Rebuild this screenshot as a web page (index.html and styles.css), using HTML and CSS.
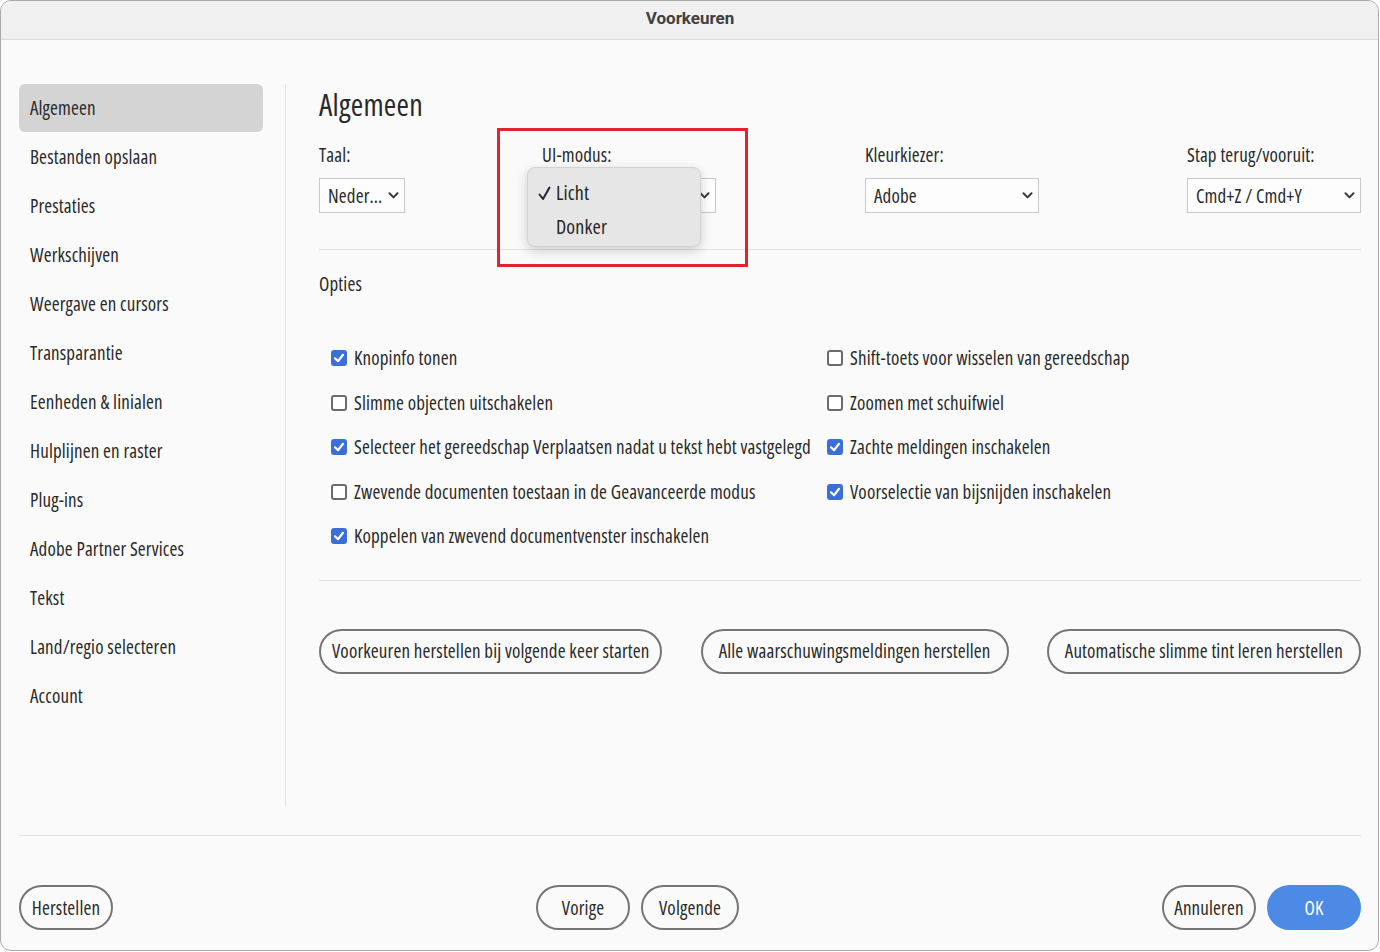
FILE: index.html
```html
<!DOCTYPE html>
<html lang="nl">
<head>
<meta charset="utf-8">
<title>Voorkeuren</title>
<link rel="stylesheet" href="styles.css">
</head>
<body>
<div class="window">
  <header class="titlebar">Voorkeuren</header>
  <div class="body">
    <div class="main">
      <nav class="sidebar">
        <div class="nav-item active">Algemeen</div>
        <div class="nav-item">Bestanden opslaan</div>
        <div class="nav-item">Prestaties</div>
        <div class="nav-item">Werkschijven</div>
        <div class="nav-item">Weergave en cursors</div>
        <div class="nav-item">Transparantie</div>
        <div class="nav-item">Eenheden &amp; linialen</div>
        <div class="nav-item">Hulplijnen en raster</div>
        <div class="nav-item">Plug-ins</div>
        <div class="nav-item">Adobe Partner Services</div>
        <div class="nav-item">Tekst</div>
        <div class="nav-item">Land/regio selecteren</div>
        <div class="nav-item">Account</div>
      </nav>
      <div class="vdivider"></div>
      <section class="content">
        <h1 class="heading">Algemeen</h1>
        <div class="fields">
          <div class="field">
            <div class="label">Taal:</div>
            <div class="select w-taal"><span>Neder…</span><svg class="chev" viewBox="0 0 10 7" width="11" height="7"><path d="M1 1.2 L5 5.4 L9 1.2"/></svg></div>
          </div>
          <div class="field ui-field">
            <div class="label">UI-modus:</div>
            <div class="select w-std"><span></span><svg class="chev" viewBox="0 0 10 7" width="11" height="7"><path d="M1 1.2 L5 5.4 L9 1.2"/></svg></div>
            <div class="highlight"></div>
            <div class="popup">
              <div class="popup-item"><span class="tick"><svg viewBox="0 0 13 15" width="13" height="15"><path d="M1.5 8.5 L5 13 L11.5 1.5"/></svg></span>Licht</div>
              <div class="popup-item"><span class="tick"></span>Donker</div>
            </div>
          </div>
          <div class="field">
            <div class="label">Kleurkiezer:</div>
            <div class="select w-std"><span>Adobe</span><svg class="chev" viewBox="0 0 10 7" width="11" height="7"><path d="M1 1.2 L5 5.4 L9 1.2"/></svg></div>
          </div>
          <div class="field">
            <div class="label">Stap terug/vooruit:</div>
            <div class="select w-std"><span>Cmd+Z / Cmd+Y</span><svg class="chev" viewBox="0 0 10 7" width="11" height="7"><path d="M1 1.2 L5 5.4 L9 1.2"/></svg></div>
          </div>
        </div>
        <hr class="sep sep-1">
        <div class="section-title">Opties</div>
        <div class="options">
          <label class="opt"><span class="cb on"><svg viewBox="0 0 16 16" width="16" height="16"><path d="M4 8.3 L7 11.2 L12 4.8"/></svg></span>Knopinfo tonen</label>
          <label class="opt"><span class="cb"></span>Shift-toets voor wisselen van gereedschap</label>
          <label class="opt"><span class="cb"></span>Slimme objecten uitschakelen</label>
          <label class="opt"><span class="cb"></span>Zoomen met schuifwiel</label>
          <label class="opt"><span class="cb on"><svg viewBox="0 0 16 16" width="16" height="16"><path d="M4 8.3 L7 11.2 L12 4.8"/></svg></span>Selecteer het gereedschap Verplaatsen nadat u tekst hebt vastgelegd</label>
          <label class="opt"><span class="cb on"><svg viewBox="0 0 16 16" width="16" height="16"><path d="M4 8.3 L7 11.2 L12 4.8"/></svg></span>Zachte meldingen inschakelen</label>
          <label class="opt"><span class="cb"></span>Zwevende documenten toestaan in de Geavanceerde modus</label>
          <label class="opt"><span class="cb on"><svg viewBox="0 0 16 16" width="16" height="16"><path d="M4 8.3 L7 11.2 L12 4.8"/></svg></span>Voorselectie van bijsnijden inschakelen</label>
          <label class="opt"><span class="cb on"><svg viewBox="0 0 16 16" width="16" height="16"><path d="M4 8.3 L7 11.2 L12 4.8"/></svg></span>Koppelen van zwevend documentvenster inschakelen</label>
        </div>
        <hr class="sep sep-2">
        <div class="reset-row">
          <button class="btn">Voorkeuren herstellen bij volgende keer starten</button>
          <button class="btn">Alle waarschuwingsmeldingen herstellen</button>
          <button class="btn">Automatische slimme tint leren herstellen</button>
        </div>
      </section>
    </div>
    <hr class="sep footer-sep">
    <footer class="footer">
      <div class="group"><button class="btn b-94">Herstellen</button></div>
      <div class="group"><button class="btn b-94">Vorige</button><button class="btn b-98">Volgende</button></div>
      <div class="group"><button class="btn b-94">Annuleren</button><button class="btn primary b-94">OK</button></div>
    </footer>
  </div>
</div>
</body>
</html>
```
FILE: styles.css
```css
* { box-sizing: border-box; }
html, body { margin: 0; padding: 0; background: #ffffff; }
body {
  width: 1380px;
  height: 952px;
  overflow: hidden;
  font-family: "Open Sans", "Liberation Sans", sans-serif;
  font-stretch: 75%;
  font-size: 19px;
  letter-spacing: 0.15px;
  color: #2a2a2a;
}
.window {
  width: 1379px;
  height: 951px;
  border: 1px solid #a9a9a9;
  border-radius: 11px;
  background: #fafafa;
  overflow: hidden;
  display: flex;
  flex-direction: column;
}
.titlebar {
  height: 39px;
  flex: none;
  background: #f0f0f0;
  border-bottom: 1px solid #dcdcdc;
  display: flex;
  align-items: center;
  justify-content: center;
  font-family: "Roboto", "Liberation Sans", sans-serif;
  font-stretch: normal;
  letter-spacing: 0;
  font-weight: 700;
  font-size: 17px;
  color: #404040;
  padding: 0 0 4px 1px;
}
.body {
  flex: 1;
  padding: 44px 17px 0 18px;
  display: flex;
  flex-direction: column;
}
.main {
  height: 722px;
  display: flex;
}
.sidebar {
  width: 244px;
  display: flex;
  flex-direction: column;
  gap: 1px;
}
.nav-item {
  height: 48px;
  line-height: 48px;
  padding-left: 11px;
  border-radius: 6px;
  white-space: nowrap;
}
.nav-item.active { background: #d4d4d4; }
.vdivider {
  width: 1px;
  background: #e2e2e2;
  margin-left: 22px;
}
.content {
  flex: 1;
  padding-left: 33px;
  min-width: 0;
}
.heading {
  margin: 0;
  height: 42px;
  line-height: 42px;
  font-size: 30px;
  letter-spacing: 0.25px;
  font-weight: 400;
  color: #2a2a2a;
}
.fields {
  margin-top: 17px;
  display: grid;
  grid-template-columns: 223px 323px 322px 1fr;
}
.field { position: relative; }
.label {
  height: 24px;
  line-height: 24px;
  margin-bottom: 11px;
  white-space: nowrap;
}
.select {
  height: 35px;
  border: 1.5px solid #c9c9c9;
  background: #fdfdfd;
  display: flex;
  align-items: center;
  justify-content: space-between;
  padding: 0 5px 0 8px;
  white-space: nowrap;
}
.w-taal { width: 86px; }
.w-std { width: 174px; }
.chev { flex: none; }
.chev path { fill: none; stroke: #3a3a3a; stroke-width: 2; stroke-linecap: round; stroke-linejoin: round; }
.highlight {
  position: absolute;
  left: -45px;
  top: -15px;
  width: 251px;
  height: 139px;
  border: 3.5px solid #e2222c;
  pointer-events: none;
}
.popup {
  position: absolute;
  left: -15px;
  top: 24px;
  width: 174px;
  height: 80px;
  background: #e6e6e6;
  border: 1px solid #d2d2d2;
  border-radius: 8px;
  box-shadow: 0 4px 12px rgba(0, 0, 0, 0.18);
  padding-top: 8px;
}
.popup-item {
  height: 34px;
  line-height: 34px;
  font-size: 20px;
  display: flex;
  align-items: center;
  color: #262626;
}
.tick {
  width: 28px;
  padding-left: 10px;
  display: flex;
  align-items: center;
}
.tick path { fill: none; stroke: #262626; stroke-width: 2; stroke-linecap: round; stroke-linejoin: round; }
.sep {
  border: 0;
  height: 1px;
  background: #e2e2e2;
  margin: 0;
}
.sep-1 { margin-top: 36px; }
.section-title {
  margin-top: 22px;
  height: 24px;
  line-height: 24px;
}
.options {
  margin-top: 40px;
  padding-left: 12px;
  display: grid;
  grid-template-columns: 496px 1fr;
  grid-auto-rows: 44.5px;
}
.opt {
  display: flex;
  align-items: center;
  white-space: nowrap;
}
.cb {
  width: 16px;
  height: 16px;
  flex: none;
  border: 2px solid #6b6b6b;
  border-radius: 3px;
  background: #ffffff;
  margin-right: 7px;
  display: flex;
  align-items: center;
  justify-content: center;
}
.cb.on {
  border: 0;
  background: #3a6fd8;
}
.cb svg path { fill: none; stroke: #ffffff; stroke-width: 2.2; stroke-linecap: round; stroke-linejoin: round; }
.sep-2 { margin-top: 21px; }
.reset-row {
  margin-top: 48px;
  display: flex;
  justify-content: space-between;
}
.btn {
  height: 45px;
  border: 2px solid #767676;
  border-radius: 23px;
  background: transparent;
  font: inherit;
  letter-spacing: inherit;
  color: #2a2a2a;
  padding: 0 12px;
  white-space: nowrap;
}
.reset-row .btn { padding: 0 16px; }
.reset-row .btn:first-child { padding: 0 11px; }
.footer-sep { margin-top: 29px; }
.footer {
  margin-top: 49px;
  display: flex;
  justify-content: space-between;
}
.group { display: flex; gap: 11px; }
.b-94 { width: 94px; padding: 0; }
.b-98 { width: 98px; padding: 0; }
.btn.primary {
  background: #4c8ae6;
  border-color: #4c8ae6;
  color: #ffffff;
}
```
